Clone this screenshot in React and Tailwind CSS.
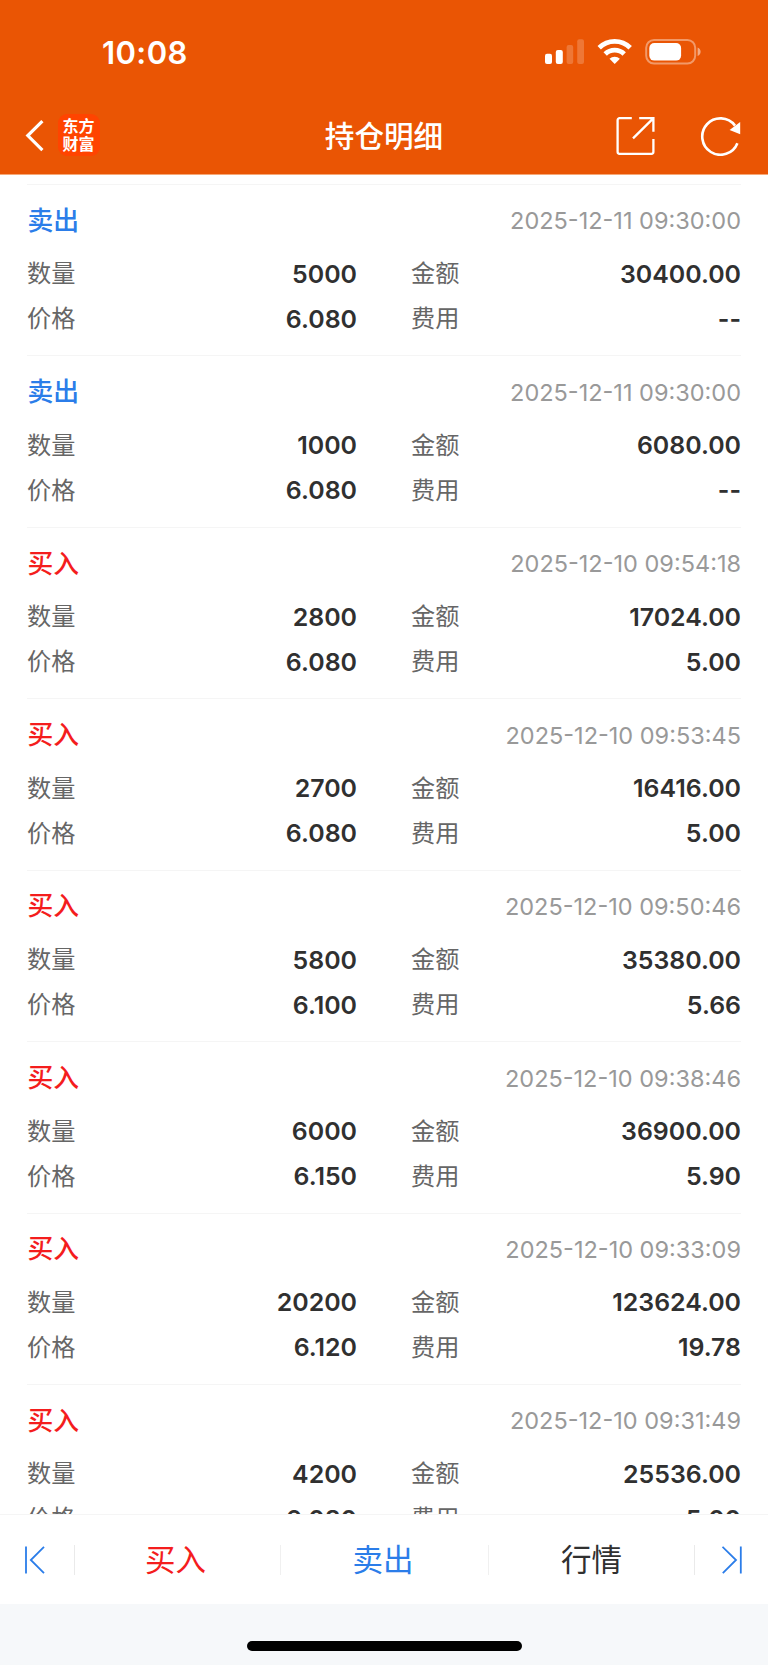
import React from 'react';

const trades = [
  { side: 'sell', time: '2025-12-11 09:30:00', qty: '5000', amount: '30400.00', price: '6.080', fee: '--' },
  { side: 'sell', time: '2025-12-11 09:30:00', qty: '1000', amount: '6080.00', price: '6.080', fee: '--' },
  { side: 'buy', time: '2025-12-10 09:54:18', qty: '2800', amount: '17024.00', price: '6.080', fee: '5.00' },
  { side: 'buy', time: '2025-12-10 09:53:45', qty: '2700', amount: '16416.00', price: '6.080', fee: '5.00' },
  { side: 'buy', time: '2025-12-10 09:50:46', qty: '5800', amount: '35380.00', price: '6.100', fee: '5.66' },
  { side: 'buy', time: '2025-12-10 09:38:46', qty: '6000', amount: '36900.00', price: '6.150', fee: '5.90' },
  { side: 'buy', time: '2025-12-10 09:33:09', qty: '20200', amount: '123624.00', price: '6.120', fee: '19.78' },
  { side: 'buy', time: '2025-12-10 09:31:49', qty: '4200', amount: '25536.00', price: '6.080', fee: '5.00' },
];

function StatusBar() {
  return (
    <div className="flex h-[98px] items-start justify-between pl-[102px] pr-[66px] pt-[33px]">
      <span className="text-[31px] font-semibold leading-[40px] tracking-[0.4px]">10:08</span>
      <svg className="mt-[5px]" width="157" height="28" viewBox="0 0 157 28" fill="#fff">
        <rect x="0" y="15.7" width="7" height="10.3" rx="2" />
        <rect x="10.8" y="12" width="7" height="14" rx="2" />
        <rect x="21.6" y="7" width="6.6" height="19" rx="2" opacity="0.2" />
        <rect x="32.2" y="1.3" width="6.8" height="24.7" rx="2" opacity="0.2" />
        <g fill="none" stroke="#fff" strokeWidth="4.8">
          <path d="M54.2 9.8a22 22 0 0 1 31 0" />
          <path d="M60.2 16a13.4 13.4 0 0 1 19 0" />
        </g>
        <path d="M69.7 26l-5.2-5.2a7.6 7.6 0 0 1 10.4 0z" />
        <rect x="101.2" y="2" width="49" height="23.6" rx="7.8" fill="none" stroke="#fff" strokeWidth="2" opacity="0.4" />
        <rect x="104.3" y="5" width="31.8" height="17.6" rx="5" />
        <path d="M152.6 9.6c4 1.4 4 7 0 8.4z" opacity="0.5" />
      </svg>
    </div>
  );
}

function NavBar() {
  return (
    <div className="grid h-[76px] grid-cols-3 items-center pl-[25px] pr-[27px]">
      <div className="flex items-center">
        <svg width="19" height="32" viewBox="0 0 19 32" fill="none" stroke="#fff" strokeWidth="3.2">
          <path d="M17.4 1.2L2.8 15.6l14.6 14.6" />
        </svg>
        <div className="ml-[13.5px] mt-[-3px] flex h-[42px] w-[42px] flex-col items-center justify-center rounded-[9px] bg-[#ff4400] text-[16px] font-bold leading-[18px]">
          <span>东方</span>
          <span>财富</span>
        </div>
      </div>
      <h1 className="pl-[2px] text-center text-[29.6px] font-medium leading-[40px]">持仓明细</h1>
      <div className="flex items-center justify-end gap-[45px]">
        <svg width="40" height="40" viewBox="0 0 40 40" fill="none" stroke="#fff" strokeWidth="2.3">
          <path d="M16.8 2.2H4.6a2 2 0 0 0-2 2v31.6a2 2 0 0 0 2 2h31.8a2 2 0 0 0 2-2V23" />
          <path d="M24.2 2.2h14.2v13.6M38 2.6L18 22.4" />
        </svg>
        <svg width="41" height="40" viewBox="0 0 41 40" fill="none" stroke="#fff" strokeWidth="2.6">
          <path d="M37.4 27.2A18.2 18.2 0 1 1 35 9.6" />
          <path d="M40.2 6v12.2L29.6 14z" fill="#fff" stroke="none" />
        </svg>
      </div>
    </div>
  );
}

function Field({ label, value }) {
  return (
    <div className="flex h-[45px] items-center justify-between">
      <span className="text-[24.2px] text-[#666]">{label}</span>
      <span className="text-[24.9px] font-semibold text-[#303030]">{value}</span>
    </div>
  );
}

function TradeItem({ trade }) {
  const sell = trade.side === 'sell';
  return (
    <li className="h-[171.45px] shrink-0 border-t border-[#f5f5f5] pt-[11px]">
      <div className="flex h-[50px] items-center justify-between">
        <span className={`pl-[0.5px] text-[25.8px] font-medium ${sell ? 'text-[#2b7de9]' : 'text-[#f41d1d]'}`}>
          {sell ? '卖出' : '买入'}
        </span>
        <span className="text-[23.5px] text-[#999]">{trade.time}</span>
      </div>
      <div className="mt-[6px] grid grid-cols-2 gap-x-[54px]">
        <Field label="数量" value={trade.qty} />
        <Field label="金额" value={trade.amount} />
        <Field label="价格" value={trade.price} />
        <Field label="费用" value={trade.fee} />
      </div>
    </li>
  );
}

function BottomBar() {
  return (
    <nav className="flex h-[90px] shrink-0 items-center border-t border-[#f5f5f5] bg-white text-[30.5px]">
      <button className="flex h-[30px] w-[75px] items-center border-r border-[#eaeaea] pl-[25px]">
        <svg width="20" height="28" viewBox="0 0 20 28" fill="none" stroke="#2b7de9" strokeWidth="1.8">
          <path d="M1 .5v27M19 .8L5.8 14 19 27.2" />
        </svg>
      </button>
      <button className="h-[30px] w-[206px] border-r border-[#f0f0f0] pr-[4px] leading-[28px] text-[#f41d1d]">买入</button>
      <button className="h-[30px] w-[208px] border-r border-[#f0f0f0] pr-[3px] leading-[28px] text-[#2b7de9]">卖出</button>
      <button className="h-[30px] flex-1 border-r border-[#eaeaea] leading-[28px] text-[#303030]">行情</button>
      <button className="flex h-[30px] w-[73px] items-center justify-end pr-[26px]">
        <svg width="20" height="28" viewBox="0 0 20 28" fill="none" stroke="#2b7de9" strokeWidth="1.8">
          <path d="M.5.8L14 14 .8 27.2M18.8.5v27" />
        </svg>
      </button>
    </nav>
  );
}

function App() {
  return (
    <div className="flex h-[1665px] w-[768px] flex-col overflow-hidden bg-white font-['Inter','Noto_Sans_CJK_SC',sans-serif]">
      <header className="h-[175px] shrink-0 border-b border-[#f6a877] bg-[#ea5504] text-white">
        <StatusBar />
        <NavBar />
      </header>

      <ul className="flex min-h-0 flex-1 flex-col overflow-hidden px-[27px] pt-[9px]">
        {trades.map((trade, i) => (
          <TradeItem key={i} trade={trade} />
        ))}
      </ul>

      <BottomBar />

      {/* Home indicator */}
      <div className="flex h-[61px] shrink-0 justify-center bg-[#f6f8fa] pt-[37px]">
        <div className="h-[9.5px] w-[275px] rounded-full bg-black"></div>
      </div>
    </div>
  );
}

export default App;
